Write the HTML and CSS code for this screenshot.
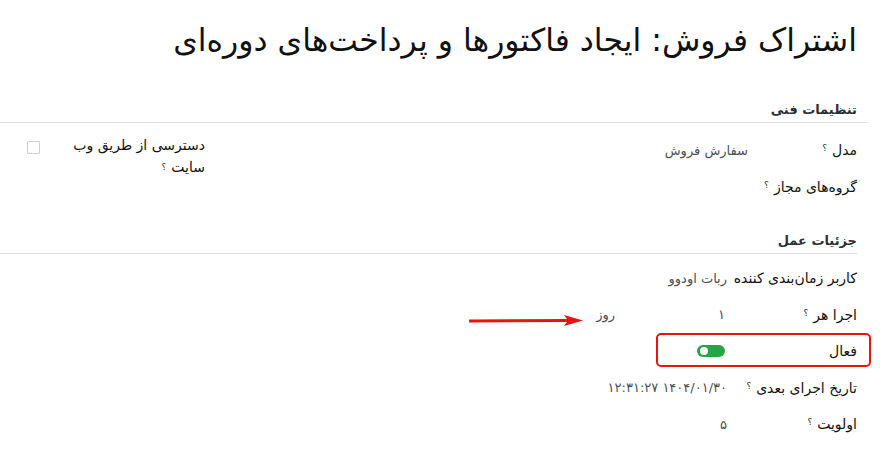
FILE: index.html
```html
<!DOCTYPE html>
<html lang="fa" dir="rtl">
<head>
<meta charset="utf-8">
<title>اشتراک فروش</title>
<link rel="stylesheet" href="styles.css">
</head>
<body>
<div class="page">
  <h1 class="title">اشتراک فروش: ایجاد فاکتورها و پرداخت‌های دوره‌ای</h1>

  <section class="sec sec-tech">
    <h2 class="sec-head">تنظیمات فنی</h2>
    <div class="sec-body two-col">
      <div class="group g-main">
        <div class="row">
          <div class="lbl">مدل<span class="help">؟</span></div>
          <div class="val">سفارش فروش</div>
        </div>
        <div class="row">
          <div class="lbl nowrap">گروه‌های مجاز<span class="help">؟</span></div>
          <div class="val"></div>
        </div>
      </div>
      <div class="group g-side">
        <div class="row row-side">
          <div class="lbl lbl-side">دسترسی از طریق وب سایت<span class="help help-low">؟</span></div>
          <div class="val val-side"><span class="checkbox"></span></div>
        </div>
      </div>
    </div>
  </section>

  <section class="sec sec-action">
    <h2 class="sec-head">جزئیات عمل</h2>
    <div class="sec-body">
      <div class="group g-wide">
        <div class="row">
          <div class="lbl nowrap">کاربر زمان‌بندی کننده</div>
          <div class="val">ربات اودوو</div>
        </div>
        <div class="row">
          <div class="lbl">اجرا هر<span class="help">؟</span></div>
          <div class="val"><span class="num">۱</span><span class="unit">روز</span></div>
        </div>
        <div class="row row-active">
          <div class="lbl">فعال</div>
          <div class="val"><span class="toggle"><span class="knob"></span></span></div>
        </div>
        <div class="row">
          <div class="lbl nowrap">تاریخ اجرای بعدی<span class="help">؟</span></div>
          <div class="val">۱۴۰۴/۰۱/۳۰ ۱۲:۳۱:۲۷</div>
        </div>
        <div class="row">
          <div class="lbl">اولویت<span class="help">؟</span></div>
          <div class="val">۵</div>
        </div>
      </div>
    </div>
  </section>

  <svg class="arrow" width="120" height="16" viewBox="0 0 120 16" aria-hidden="true">
    <line x1="3" y1="9" x2="104" y2="8.5" stroke="#ee1111" stroke-width="3"/>
    <polygon points="98,3 117,8.5 98,14 102,8.5" fill="#ee1111"/>
  </svg>
</div>
</body>
</html>
```

FILE: styles.css
```css
* { box-sizing: border-box; }

html, body {
  margin: 0;
  padding: 0;
  background: #ffffff;
}

body {
  font-family: "DejaVu Sans", "Noto Sans", sans-serif;
  color: #1f2328;
  font-size: 13px;
}

.page {
  position: relative;
  width: 880px;
  height: 452px;
  padding: 16px 23px 0 0;
  overflow: hidden;
}

.title {
  margin: 0;
  font-size: 31.5px;
  font-weight: normal;
  line-height: 48px;
  color: #111111;
}

.sec-head {
  margin: 36px 0 0 0;
  padding-bottom: 2px;
  font-size: 13px;
  line-height: 20px;
  font-weight: bold;
  color: #2b2f33;
  border-bottom: 1px solid #dedede;
}

.sec-tech .sec-head { margin-right: -10px; padding-right: 10px; }

.sec-action .sec-head { margin-top: 26px; }

.sec-body {
  padding-top: 9px;
}

.sec-action .sec-body { padding-top: 6px; }

.two-col {
  display: flex;
  justify-content: space-between;
}

.g-main { width: 420px; }
.g-side { width: 205px; }

.row {
  display: flex;
  align-items: center;
  min-height: 36.5px;
}

.lbl {
  flex: 0 0 109px;
  color: #111111;
  font-size: 14px;
}

.g-wide .lbl { flex-basis: 130px; }

.nowrap { white-space: nowrap; }

.help {
  display: inline-block;
  margin-right: 5px;
  font-size: 9px;
  line-height: 1;
  vertical-align: 4px;
  color: #333333;
}

.help-low { vertical-align: 2px; }

.val {
  flex: 1;
  color: #4a4f55;
  font-size: 13px;
}

.row-side { align-items: flex-start; padding-top: 2px; }

.lbl-side {
  flex: 0 0 140px;
  line-height: 22px;
}

.val-side {
  display: flex;
  justify-content: flex-end;
  padding-top: 7px;
  padding-left: 27px;
}

.checkbox {
  display: block;
  width: 13px;
  height: 13px;
  border: 1px solid #cfcfcf;
  border-radius: 1px;
  background: #fff;
}

.num {
  display: inline-block;
  width: 112px;
  padding-right: 2px;
}

.unit { color: #4a4f55; }

.row-active { position: relative; }

.row-active::before {
  content: "";
  position: absolute;
  top: 0;
  bottom: 3px;
  right: -14px;
  width: 211px;
  border: 2px solid #ee1111;
  border-radius: 5px;
}

.toggle {
  display: block;
  width: 28px;
  height: 12px;
  margin-right: 2px;
  border-radius: 6px;
  background: #27a445;
  position: relative;
}

.knob {
  position: absolute;
  left: 3px;
  top: 2px;
  width: 8px;
  height: 8px;
  border-radius: 50%;
  background: #ffffff;
}

.arrow {
  position: absolute;
  left: 466px;
  top: 312px;
}
```
